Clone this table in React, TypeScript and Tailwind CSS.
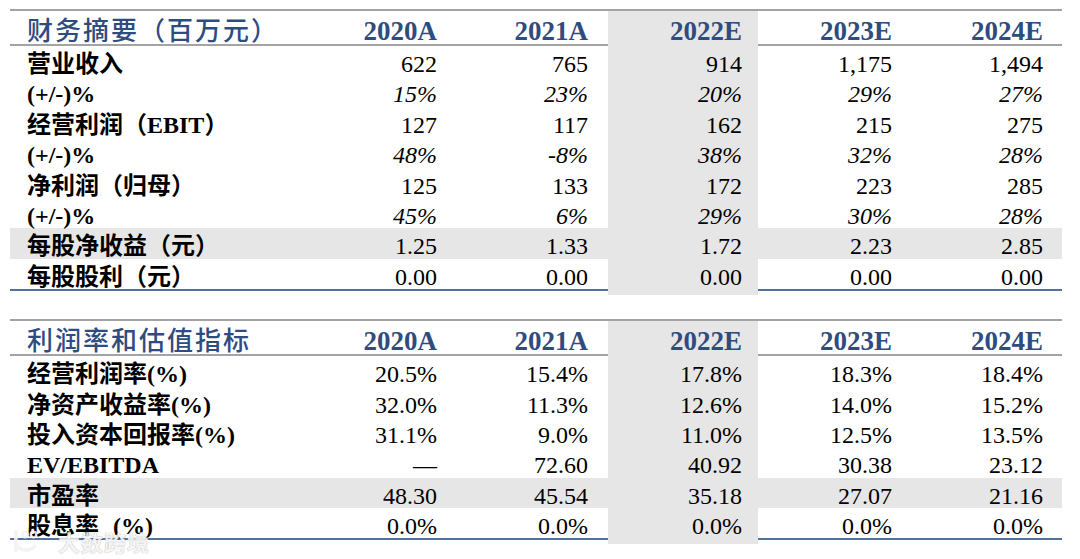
import React from "react";

type Row = { label: React.ReactNode; values: string[]; italic?: boolean; shaded?: boolean };

const serif = "font-['Liberation_Serif','Times_New_Roman',serif]";
const cjk = "font-['Liberation_Serif','Noto_Sans_CJK_SC',serif] [text-spacing-trim:space-all]";

const years = ["2020A", "2021A", "2022E", "2023E", "2024E"];
const padR = ["pr-[21px]", "pr-[20px]", "pr-[16px]", "pr-[16px]", "pr-[19px]"];

const Pct = ({ gap }: { gap?: boolean }) => (
  <span className={`${serif} font-bold ${gap ? "ml-[14px]" : ""}`}>(%)</span>
);

const summary: Row[] = [
  { label: "营业收入", values: ["622", "765", "914", "1,175", "1,494"] },
  { label: <span className={`${serif} font-bold`}>(+/-)%</span>, values: ["15%", "23%", "20%", "29%", "27%"], italic: true },
  {
    label: (
      <>
        经营利润（<span className={`${serif} font-bold`}>EBIT</span>）
      </>
    ),
    values: ["127", "117", "162", "215", "275"],
  },
  { label: <span className={`${serif} font-bold`}>(+/-)%</span>, values: ["48%", "-8%", "38%", "32%", "28%"], italic: true },
  { label: "净利润（归母）", values: ["125", "133", "172", "223", "285"] },
  { label: <span className={`${serif} font-bold`}>(+/-)%</span>, values: ["45%", "6%", "29%", "30%", "28%"], italic: true },
  { label: "每股净收益（元）", values: ["1.25", "1.33", "1.72", "2.23", "2.85"], shaded: true },
  { label: "每股股利（元）", values: ["0.00", "0.00", "0.00", "0.00", "0.00"] },
];

const ratios: Row[] = [
  { label: <>经营利润率<Pct /></>, values: ["20.5%", "15.4%", "17.8%", "18.3%", "18.4%"] },
  { label: <>净资产收益率<Pct /></>, values: ["32.0%", "11.3%", "12.6%", "14.0%", "15.2%"] },
  { label: <>投入资本回报率<Pct /></>, values: ["31.1%", "9.0%", "11.0%", "12.5%", "13.5%"] },
  { label: <span className={`${serif} font-bold`}>EV/EBITDA</span>, values: ["—", "72.60", "40.92", "30.38", "23.12"] },
  { label: "市盈率", values: ["48.30", "45.54", "35.18", "27.07", "21.16"], shaded: true },
  { label: <>股息率<Pct gap /></>, values: ["0.0%", "0.0%", "0.0%", "0.0%", "0.0%"] },
];

function Table({ title, rows }: { title: string; rows: Row[] }) {
  return (
    <div className="border-t-2 border-b-2 border-t-[#a3a3a3] border-b-[#54709c]">
      <div className="grid grid-cols-[298px_150px_150px_150px_150px_154px] h-[35px] border-b-2 border-[#a3a3a3]">
        <div className={`${cjk} flex items-center pl-[17px] text-[26px] tracking-[2px] text-[#2f4c80] font-medium whitespace-nowrap`}>
          {title}
        </div>
        {years.map((y, i) => (
          <div
            key={y}
            className={`${serif} flex items-center justify-end text-[27px] font-bold text-[#2f4c80] ${padR[i]} ${
              i === 2 ? "bg-[#e6e6e6]" : ""
            }`}
          >
            {y}
          </div>
        ))}
      </div>
      {rows.map((r, ri) => (
        <div
          key={ri}
          className={`grid grid-cols-[298px_150px_150px_150px_150px_154px] h-[30.4px] ${r.shaded ? "bg-[#e6e6e6]" : ""}`}
        >
          <div className={`${cjk} flex items-center pl-[17px] text-[24px] font-bold text-black whitespace-nowrap`}>
            {r.label}
          </div>
          {r.values.map((v, i) => (
            <div
              key={i}
              className={`${serif} flex items-center justify-end text-[24px] text-black ${padR[i]} ${
                r.italic ? "italic" : ""
              } ${i === 2 ? "bg-[#e6e6e6]" : ""}`}
            >
              {v}
            </div>
          ))}
        </div>
      ))}
    </div>
  );
}

export default function App() {
  return (
    <div className="relative w-[1080px] h-[559px] bg-white overflow-hidden">
      <div className="pt-[9px] px-[10px] flex flex-col gap-[28px] w-[1072px]">
        <Table title="财务摘要（百万元）" rows={summary} />
        <Table title="利润率和估值指标" rows={ratios} />
      </div>
      {/* watermark */}
      <div className="absolute left-[10px] top-[529px] flex items-center gap-[14px] opacity-90">
        <svg width="34" height="24" viewBox="0 0 34 26" fill="none" stroke="#f2f2f2" strokeWidth="4" strokeLinecap="round">
          <path d="M5 3 V23" />
          <path d="M5 16 C9 24 19 25 25 19" />
          <circle cx="15" cy="6" r="3" strokeWidth="2.5" />
          <circle cx="24" cy="6" r="3" strokeWidth="2.5" />
        </svg>
        <span className="font-['Noto_Sans_CJK_SC',sans-serif] text-[22px] leading-[24px] font-bold text-[#f4f4f4] tracking-[1px] [text-shadow:0_0_1px_rgba(110,110,110,0.7)]">
          大数跨境
        </span>
      </div>
    </div>
  );
}
